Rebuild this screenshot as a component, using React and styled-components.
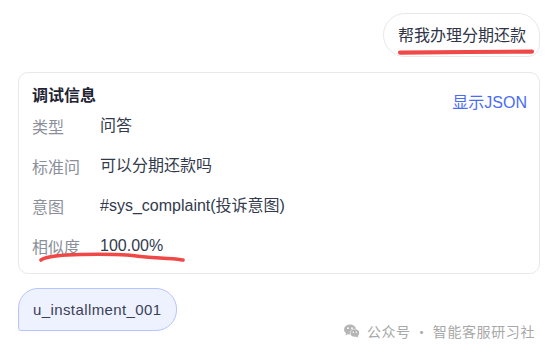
import React from "react";
import styled, { createGlobalStyle } from "styled-components";

const Global = createGlobalStyle`
  html, body { margin: 0; padding: 0; background: #fff; }
  body { font-family: "Liberation Sans", "Noto Sans CJK SC", sans-serif; }
`;

const Page = styled.div`
  position: relative;
  width: 554px;
  height: 357px;
  box-sizing: border-box;
  padding: 13px 14px 0 18px;
  display: flex;
  flex-direction: column;
  overflow: hidden;
`;

const UserRow = styled.div`
  display: flex;
  justify-content: flex-end;
`;

const UserBubble = styled.div`
  position: relative;
  box-sizing: border-box;
  height: 44px;
  padding: 0 13px 2px 14px;
  display: flex;
  align-items: center;
  border: 1px solid #e6e8ec;
  border-radius: 22px 22px 12px 22px;
  background: #fff;
  font-size: 16px;
  line-height: 22px;
  color: #2f3547;
  font-family: "Noto Sans CJK SC", sans-serif;
`;

const Card = styled.div`
  position: relative;
  margin-top: 15px;
  box-sizing: border-box;
  height: 202px;
  border: 1px solid #e6e8ec;
  border-radius: 10px;
  padding: 10px 12px 0 13px;
  display: flex;
  flex-direction: column;
`;

const CardHeader = styled.div`
  display: flex;
  justify-content: space-between;
  align-items: flex-start;
  height: 22px;
`;

const Title = styled.div`
  font-family: "Noto Sans CJK SC", sans-serif;
  font-weight: 700;
  font-size: 16px;
  line-height: 22px;
  color: #1f2433;
`;

const JsonLink = styled.a`
  margin-top: 9px;
  font-size: 16px;
  line-height: 22px;
  color: #4a6cf5;
  cursor: pointer;
`;

const Rows = styled.div`
  margin-top: 9px;
  display: flex;
  flex-direction: column;
  gap: 16px;
`;

const Row = styled.div`
  display: flex;
  align-items: center;
  height: 24px;
  font-size: 16px;
`;

const Label = styled.span`
  width: 68px;
  flex: none;
  color: #8b8f99;
  font-family: "Noto Sans CJK SC", sans-serif;
  line-height: 24px;
`;

const Value = styled.span`
  color: #333a4d;
  line-height: 24px;
  white-space: nowrap;
`;

const BotRow = styled.div`
  margin-top: 14px;
  display: flex;
`;

const IdBubble = styled.div`
  box-sizing: border-box;
  height: 43px;
  padding: 0 14px;
  display: flex;
  align-items: center;
  background: #eef2ff;
  border: 1px solid #b7c5ff;
  border-radius: 20px 21px 21px 3px;
  font-size: 15px;
  letter-spacing: 0.4px;
  color: #3a4155;
`;

const Scribble = styled.svg`
  position: absolute;
  pointer-events: none;
  overflow: visible;
`;

const Watermark = styled.div`
  position: absolute;
  right: 19px;
  bottom: 17px;
  display: flex;
  align-items: center;
  gap: 7px;
  font-family: "Noto Sans CJK SC", sans-serif;
  font-size: 14px;
  line-height: 18px;
  color: #a8a8a8;
  letter-spacing: 0.6px;
`;

function WeChat() {
  return (
    <svg width="16" height="14" viewBox="0 0 16 14">
      <ellipse cx="6" cy="5.5" rx="6" ry="5" fill="#b5b5b5" />
      <path d="M2 9 L1.5 11.5 L4.5 10 Z" fill="#b5b5b5" />
      <circle cx="4" cy="4.2" r="0.9" fill="#fff" />
      <circle cx="8" cy="4.2" r="0.9" fill="#fff" />
      <ellipse cx="10.8" cy="9" rx="5" ry="4.2" fill="#fff" />
      <ellipse cx="10.8" cy="9" rx="4.4" ry="3.7" fill="#b5b5b5" />
      <path d="M13.5 11.8 L14.5 13.8 L11.5 12.5 Z" fill="#b5b5b5" />
      <circle cx="9.3" cy="8.2" r="0.7" fill="#fff" />
      <circle cx="12.3" cy="8.2" r="0.7" fill="#fff" />
    </svg>
  );
}

const rows = [
  ["类型", "问答"],
  ["标准问", "可以分期还款吗"],
  ["意图", "#sys_complaint(投诉意图)"],
  ["相似度", "100.00%"],
];

export default function App() {
  return (
    <>
      <Global />
      <Page>
        <UserRow>
          <UserBubble>
            帮我办理分期还款
            <Scribble
              width="136"
              height="6"
              viewBox="0 0 136 6"
              style={{ left: 14, bottom: 1 }}
            >
              <path
                d="M2 3.6 L70 3 L134 2.6"
                stroke="#f04747"
                strokeWidth="4.2"
                strokeLinecap="round"
                fill="none"
              />
            </Scribble>
          </UserBubble>
        </UserRow>
        <Card>
          <CardHeader>
            <Title>调试信息</Title>
            <JsonLink>显示JSON</JsonLink>
          </CardHeader>
          <Rows>
            {rows.map(([k, v]) => (
              <Row key={k}>
                <Label>{k}</Label>
                <Value>{v}</Value>
              </Row>
            ))}
          </Rows>
          <Scribble
            width="146"
            height="12"
            viewBox="0 0 146 12"
            style={{ left: 20, top: 178 }}
          >
            <path
              d="M2 9 C5 7, 12 5, 28 4 S 75 3, 88 4 S 101 6, 121 7 S 140 8.5, 144 9"
              stroke="#f04747"
              strokeWidth="3.6"
              strokeLinecap="round"
              fill="none"
            />
          </Scribble>
        </Card>
        <BotRow>
          <IdBubble>u_installment_001</IdBubble>
        </BotRow>
        <Watermark>
          <WeChat />
          <span>公众号 · 智能客服研习社</span>
        </Watermark>
      </Page>
    </>
  );
}
